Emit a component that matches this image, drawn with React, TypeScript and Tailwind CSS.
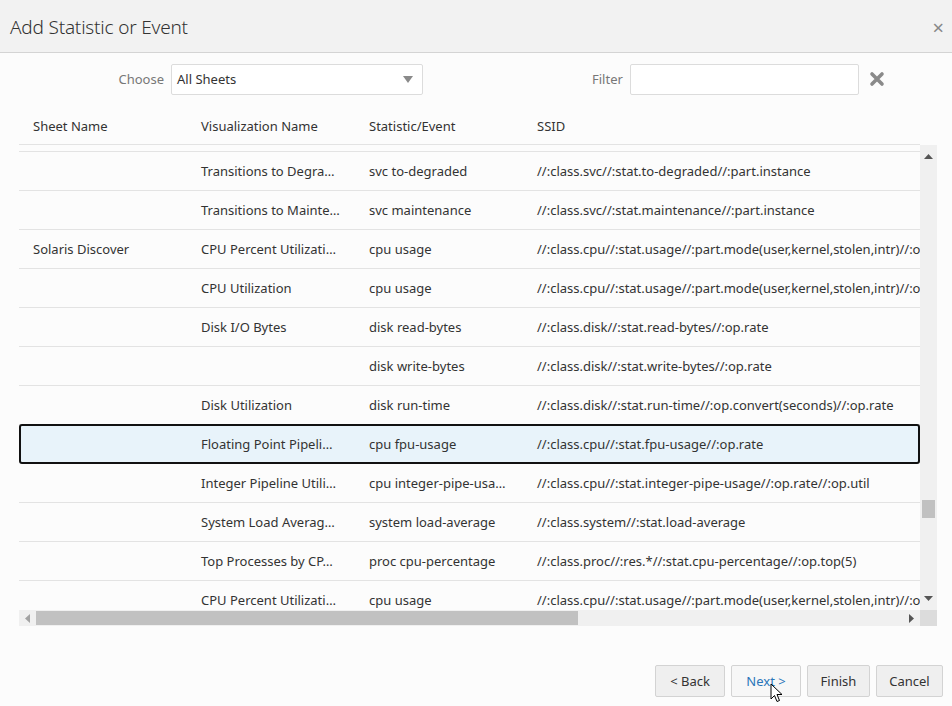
import React from "react";

type Row = {
  sheet: string;
  viz: string;
  stat: string;
  ssid: string;
  selected?: boolean;
};

// first row is scrolled out of view, only its bottom border shows
const rows: Row[] = [
  { sheet: "", viz: "", stat: "", ssid: "" },
  { sheet: "", viz: "Transitions to Degra…", stat: "svc to-degraded", ssid: "//:class.svc//:stat.to-degraded//:part.instance" },
  { sheet: "", viz: "Transitions to Mainte…", stat: "svc maintenance", ssid: "//:class.svc//:stat.maintenance//:part.instance" },
  { sheet: "Solaris Discover", viz: "CPU Percent Utilizati…", stat: "cpu usage", ssid: "//:class.cpu//:stat.usage//:part.mode(user,kernel,stolen,intr)//:op.rate" },
  { sheet: "", viz: "CPU Utilization", stat: "cpu usage", ssid: "//:class.cpu//:stat.usage//:part.mode(user,kernel,stolen,intr)//:op.rate" },
  { sheet: "", viz: "Disk I/O Bytes", stat: "disk read-bytes", ssid: "//:class.disk//:stat.read-bytes//:op.rate" },
  { sheet: "", viz: "", stat: "disk write-bytes", ssid: "//:class.disk//:stat.write-bytes//:op.rate" },
  { sheet: "", viz: "Disk Utilization", stat: "disk run-time", ssid: "//:class.disk//:stat.run-time//:op.convert(seconds)//:op.rate" },
  { sheet: "", viz: "Floating Point Pipeli…", stat: "cpu fpu-usage", ssid: "//:class.cpu//:stat.fpu-usage//:op.rate", selected: true },
  { sheet: "", viz: "Integer Pipeline Utili…", stat: "cpu integer-pipe-usa…", ssid: "//:class.cpu//:stat.integer-pipe-usage//:op.rate//:op.util" },
  { sheet: "", viz: "System Load Averag…", stat: "system load-average", ssid: "//:class.system//:stat.load-average" },
  { sheet: "", viz: "Top Processes by CP…", stat: "proc cpu-percentage", ssid: "//:class.proc//:res.*//:stat.cpu-percentage//:op.top(5)" },
  { sheet: "", viz: "CPU Percent Utilizati…", stat: "cpu usage", ssid: "//:class.cpu//:stat.usage//:part.mode(user,kernel,stolen,intr)//:op.rate" },
];

function Cells({ r }: { r: Row }) {
  return (
    <>
      <div className="w-[168px] shrink-0 pl-[14px]">{r.sheet}</div>
      <div className="w-[168px] shrink-0 pl-[14px]">{r.viz}</div>
      <div className="w-[168px] shrink-0 pl-[14px]">{r.stat}</div>
      <div className="shrink-0 pl-[14px]">{r.ssid}</div>
    </>
  );
}

export default function App() {
  return (
    <div
      className="w-[952px] h-[706px] bg-[#fcfcfc] flex flex-col text-[#333] overflow-hidden relative"
      style={{ fontFamily: '"Noto Sans", "Open Sans", sans-serif' }}
    >
      {/* header */}
      <div className="h-[53px] shrink-0 bg-[#f2f2f2] border-b border-[#d4d4d4] flex items-center justify-between pl-[10px] pr-[8px] pt-[3px]">
        <h1 className="text-[19px] font-light text-[#333] tracking-[-0.2px]">Add Statistic or Event</h1>
        <span className="text-[20px] text-[#888] leading-none">×</span>
      </div>

      {/* toolbar */}
      <div className="h-[57px] shrink-0 flex items-start pt-[11px] text-[13px]">
        <div className="w-[164px] h-[30px] flex items-center justify-end text-[#777] pt-[2px]">Choose</div>
        <div className="ml-[7px] w-[252px] h-[31px] bg-white border border-[#dcdcdc] rounded-[2px] flex items-center justify-between pl-[5px] pr-[9px]">
          <span className="text-[#333] pt-[1px]">All Sheets</span>
          <svg width="10" height="7" viewBox="0 0 10 7">
            <path d="M0 0 H10 L5 7 Z" fill="#8a8a8a" />
          </svg>
        </div>
        <div className="ml-[169px] h-[30px] flex items-center text-[#777] pt-[2px]">Filter</div>
        <div className="ml-[7px] w-[229px] h-[31px] bg-white border border-[#dcdcdc] rounded-[2px]" />
        <div className="ml-[10px] h-[30px] flex items-center">
          <svg width="16" height="16" viewBox="0 0 16 16">
            <path d="M3 3 L13 13 M13 3 L3 13" stroke="#8a8a8a" strokeWidth="3.6" strokeLinecap="round" />
          </svg>
        </div>
      </div>

      {/* table */}
      <div className="ml-[19px] mr-[15px] flex flex-col text-[13px]">
        <div className="h-[35px] flex items-center border-b border-[#e3e3e3] mr-[17px]">
          <div className="w-[168px] pl-[14px]">Sheet Name</div>
          <div className="w-[168px] pl-[14px]">Visualization Name</div>
          <div className="w-[168px] pl-[14px]">Statistic/Event</div>
          <div className="pl-[14px]">SSID</div>
        </div>

        <div className="flex h-[465px]">
          <div className="flex-1 overflow-hidden bg-[#fcfcfc]">
            <div className="-mt-[32px]">
              {rows.map((r, i) =>
                r.selected ? (
                  <div
                    key={i}
                    className="h-[40px] flex items-center whitespace-nowrap bg-[#e8f3fa] border-2 border-[#111] rounded-[3px] -mt-px pt-[2px]"
                  >
                    <div className="-ml-[2px] flex">
                      <Cells r={r} />
                    </div>
                  </div>
                ) : (
                  <div key={i} className="h-[39px] flex items-center whitespace-nowrap border-b border-[#e3e3e3] pt-[2px]">
                    <Cells r={r} />
                  </div>
                )
              )}
            </div>
          </div>
          {/* vertical scrollbar */}
          <div className="w-[17px] bg-[#f0f0f0] flex flex-col items-center justify-between py-[9px]">
            <svg width="9" height="5" viewBox="0 0 9 5">
              <path d="M0 5 L4.5 0 L9 5 Z" fill="#555" />
            </svg>
            <div className="flex-1 w-full flex flex-col justify-end pb-[78px]">
              <div className="mx-[2px] h-[18px] bg-[#c1c1c1]" />
            </div>
            <svg width="9" height="5" viewBox="0 0 9 5">
              <path d="M0 0 L9 0 L4.5 5 Z" fill="#555" />
            </svg>
          </div>
        </div>

        {/* horizontal scrollbar */}
        <div className="flex h-[16px]">
          <div className="flex-1 bg-[#f0f0f0] flex items-center">
            <div className="w-[17px] flex justify-center">
              <svg width="5" height="9" viewBox="0 0 5 9">
                <path d="M5 0 L0 4.5 L5 9 Z" fill="#a3a3a3" />
              </svg>
            </div>
            <div className="w-[542px] h-[14px] bg-[#c1c1c1]" />
            <div className="flex-1" />
            <div className="w-[17px] flex justify-center">
              <svg width="5" height="9" viewBox="0 0 5 9">
                <path d="M0 0 L5 4.5 L0 9 Z" fill="#555" />
              </svg>
            </div>
          </div>
          <div className="w-[17px] bg-[#dcdcdc]" />
        </div>
      </div>

      {/* footer */}
      <div className="flex justify-end gap-[6px] pr-[9px] mt-[39px] text-[13px]">
        <button className="w-[70px] h-[32px] bg-[#efefef] border border-[#d3d3d3] rounded-[2px] text-[#333] pt-[1px]">&lt; Back</button>
        <button className="w-[70px] h-[32px] bg-[#f7f7f7] border border-[#d3d3d3] rounded-[2px] text-[#2b76b9] pt-[1px]">Next &gt;</button>
        <button className="w-[63px] h-[32px] bg-[#efefef] border border-[#d3d3d3] rounded-[2px] text-[#333] pt-[1px]">Finish</button>
        <button className="w-[67px] h-[32px] bg-[#efefef] border border-[#d3d3d3] rounded-[2px] text-[#333] pt-[1px]">Cancel</button>
      </div>

      {/* mouse cursor */}
      <svg className="absolute left-[770px] top-[683px]" width="13" height="20" viewBox="0 0 13 20">
        <path d="M1 1 L1 16 L4.5 12.5 L7 18.5 L9.5 17.5 L7 11.5 L12 11.5 Z" fill="#fff" stroke="#000" strokeWidth="1" strokeLinejoin="round" />
      </svg>
    </div>
  );
}
